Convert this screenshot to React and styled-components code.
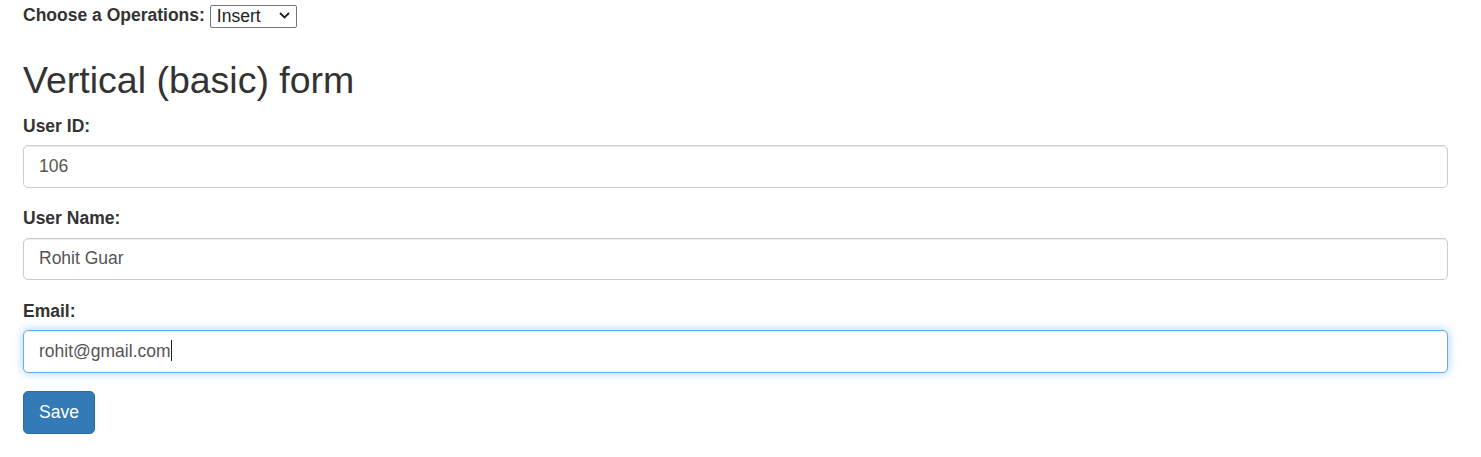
import React, { useState } from "react";
import styled, { createGlobalStyle } from "styled-components";

const GlobalStyle = createGlobalStyle`
  html, body {
    margin: 0;
    padding: 0;
    background: #fff;
  }
  body {
    font-family: "Liberation Sans", Arial, Helvetica, sans-serif;
    font-size: 17.5px;
    line-height: 1.42857;
    color: #333;
  }
`;

const Page = styled.div`
  padding: 0 33px 0 23px;
`;

const TopRow = styled.div`
  display: flex;
  align-items: center;
  height: 30px;
  gap: 5px;
`;

const Label = styled.label`
  display: block;
  font-weight: bold;
  font-size: 17.5px;
  line-height: 25px;
  margin-bottom: ${(p) => (p.$inline ? "0" : "6.25px")};
  color: #333;
`;

const SelectWrap = styled.div`
  position: relative;
  width: 87px;
  height: 23px;
  margin-top: 1px;
`;

const Select = styled.select`
  appearance: none;
  -webkit-appearance: none;
  box-sizing: border-box;
  width: 100%;
  height: 100%;
  margin: 0;
  padding: 0 0 0 6px;
  font-family: "Liberation Sans", Arial, sans-serif;
  font-size: 17.5px;
  line-height: 21px;
  color: #222;
  border: 1px solid #767676;
  border-radius: 2px;
  background: #fff;
  outline: none;
`;

const Chevron = styled.svg`
  position: absolute;
  right: 7px;
  top: 8px;
  width: 11px;
  height: 7px;
  pointer-events: none;
`;

const Heading = styled.h2`
  margin: 30px 0 12.5px;
  font-size: 37.5px;
  font-weight: 500;
  line-height: 41.25px;
  color: #333;
`;

const FormGroup = styled.div`
  margin-bottom: 18.75px;
`;

const InputWrap = styled.div`
  position: relative;
`;

const Input = styled.input`
  display: block;
  box-sizing: border-box;
  width: 100%;
  height: 42.5px;
  padding: 7.5px 15px;
  font-family: "Liberation Sans", Arial, sans-serif;
  font-size: 17.5px;
  line-height: 1.42857;
  color: #555;
  background: #fff;
  border: 1.25px solid ${(p) => (p.$focused ? "#66afe9" : "#ccc")};
  border-radius: 5px;
  outline: none;
  box-shadow: ${(p) =>
    p.$focused
      ? "inset 0 1px 1px rgba(0,0,0,.075), 0 0 10px rgba(102,175,233,.6)"
      : "inset 0 1px 1px rgba(0,0,0,.075)"};
  caret-color: transparent;
`;

const Caret = styled.span`
  position: absolute;
  top: 10px;
  left: 148px;
  width: 1px;
  height: 21px;
  background: #222;
  pointer-events: none;
`;

const Button = styled.button`
  display: inline-block;
  height: 43px;
  padding: 7.5px 15px;
  font-family: "Liberation Sans", Arial, sans-serif;
  font-size: 17.5px;
  line-height: 1.42857;
  color: #fff;
  background: #337ab7;
  border: 1.25px solid #2e6da4;
  border-radius: 5px;
  cursor: pointer;
`;

const fields = [
  { id: "userId", label: "User ID:", value: "106" },
  { id: "userName", label: "User Name:", value: "Rohit Guar" },
  { id: "email", label: "Email:", value: "rohit@gmail.com", focused: true },
];

export default function App() {
  const [op, setOp] = useState("Insert");
  const [values, setValues] = useState(
    Object.fromEntries(fields.map((f) => [f.id, f.value]))
  );

  return (
    <Page>
      <GlobalStyle />
      <TopRow>
        <Label $inline htmlFor="op">Choose a Operations:</Label>
        <SelectWrap>
          <Select id="op" value={op} onChange={(e) => setOp(e.target.value)}>
            <option>Insert</option>
            <option>Update</option>
            <option>Delete</option>
          </Select>
          <Chevron viewBox="0 0 11 7">
            <path d="M1 1l4.5 4.5L10 1" fill="none" stroke="#222" strokeWidth="1.8" />
          </Chevron>
        </SelectWrap>
      </TopRow>
      <Heading>Vertical (basic) form</Heading>
      <form onSubmit={(e) => e.preventDefault()}>
        {fields.map((f) => (
          <FormGroup key={f.id}>
            <Label htmlFor={f.id}>{f.label}</Label>
            <InputWrap>
              <Input
                id={f.id}
                $focused={f.focused}
                value={values[f.id]}
                onChange={(e) => setValues({ ...values, [f.id]: e.target.value })}
              />
              {f.focused && <Caret />}
            </InputWrap>
          </FormGroup>
        ))}
        <Button type="submit">Save</Button>
      </form>
    </Page>
  );
}
